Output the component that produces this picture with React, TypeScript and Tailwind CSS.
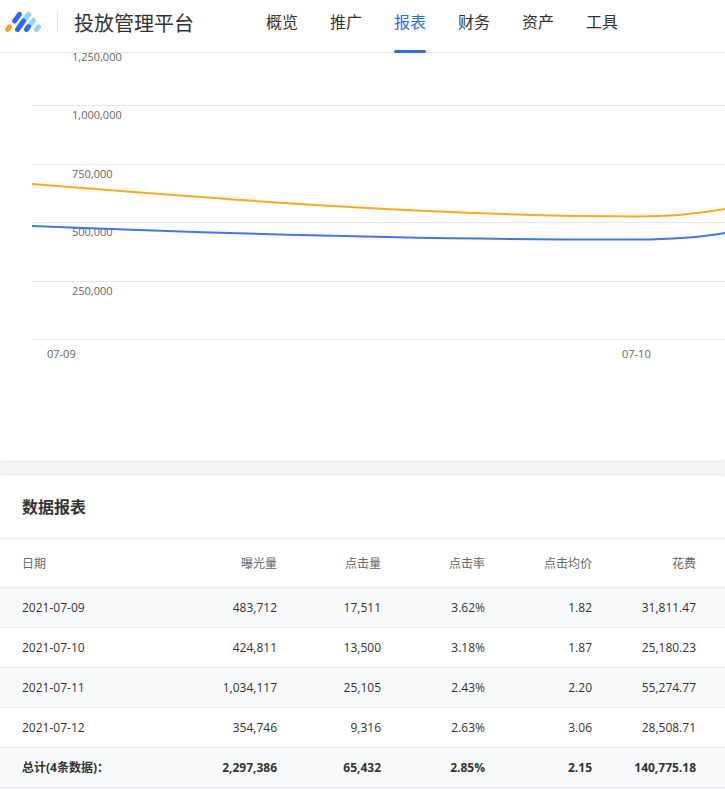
import clsx from 'clsx'

const NAV = ['概览', '推广', '报表', '财务', '资产', '工具']

const COLUMNS = [
  { label: '日期', width: 'w-auto' },
  { label: '曝光量', width: 'w-[104px]' },
  { label: '点击量', width: 'w-[104px]' },
  { label: '点击率', width: 'w-[104px]' },
  { label: '点击均价', width: 'w-[107px]' },
  { label: '花费', width: 'w-[104px]' },
]

const ROWS = [
  ['2021-07-09', '483,712', '17,511', '3.62%', '1.82', '31,811.47'],
  ['2021-07-10', '424,811', '13,500', '3.18%', '1.87', '25,180.23'],
  ['2021-07-11', '1,034,117', '25,105', '2.43%', '2.20', '55,274.77'],
  ['2021-07-12', '354,746', '9,316', '2.63%', '3.06', '28,508.71'],
]

const TOTAL = ['总计(4条数据)：', '2,297,386', '65,432', '2.85%', '2.15', '140,775.18']

const GRID = [
  { y: 52, label: '1,000,000' },
  { y: 111, label: '750,000' },
  { y: 169, label: '500,000' },
  { y: 228, label: '250,000' },
]

const Logo = () => (
  <svg className="h-7 w-10" viewBox="0 0 40 28" fill="none" strokeWidth="5" strokeLinecap="round" aria-hidden="true">
    <path d="M21.500 12L25.500 6.500M26 18L30.500 12.500M33.500 21.500L35.500 18.800" stroke="#8fd3ff" />
    <path d="M4.500 21.500L6.500 18.800" stroke="#ffa70f" />
    <path d="M11.500 13L16.500 6.500M14.500 21.500L20.500 13M23.500 21.500L25.500 18.800" stroke="#2a6cf6" />
  </svg>
)

const Header = () => (
  <header className="flex h-[53px] items-start border-b border-[#e6e7ed] bg-white">
    <div className="flex h-11 w-[266px] shrink-0 items-center pl-[3px]">
      <Logo />
      <div className="ml-[14px] h-5 w-px bg-[#e0e1e6]" />
      <h1 className="ml-4 pt-1 text-xl leading-7">投放管理平台</h1>
    </div>
    <nav className="flex gap-8">
      {NAV.map((item) => (
        <a
          key={item}
          href="#"
          className={clsx(
            'flex h-[53px] flex-col justify-between whitespace-nowrap text-base',
            item === '报表' && 'text-[#2a6cf6]',
          )}
        >
          <span className="pt-[10px] leading-6">{item}</span>
          {item === '报表' && <span className="h-[3px] rounded-sm bg-[#2a6cf6]" />}
        </a>
      ))}
    </nav>
  </header>
)

const Chart = () => (
  <section className="h-[409px] rounded-b border-b border-[#e4e6eb] bg-white pl-8">
    <svg
      className="h-[320px] w-full overflow-visible text-[11px]"
      fill="#666"
      role="img"
      aria-label="曝光量"
    >
      {GRID.map(({ y, label }) => (
        <g key={label}>
          <line x1="0" x2="100%" y1={y + 0.5} y2={y + 0.5} stroke="#e5e6ea" />
          <text x="40" y={y + 14}>{label}</text>
        </g>
      ))}
      <text x="40" y="8">1,250,000</text>
      <line x1="0" x2="100%" y1="286.5" y2="286.5" stroke="#e5e6ea" />
      <g fill="none" strokeWidth="2">
        <path d="M0 131C200 147 400 163 605 163.500C635 163.500 665 161 693 156S960 60 1180 20" stroke="#ffaa14" />
        <path d="M0 173C200 181 400 187 605 186.500C635 186.500 665 185 693 180S960 80 1180 44" stroke="#3c78ee" />
      </g>
      <text x="15" y="305">07-09</text>
      <text x="590" y="305">07-10</text>
    </svg>
  </section>
)

const Report = () => (
  <section className="mt-3 rounded-t border-t border-[#e4e6eb] bg-white">
    <h2 className="px-[22px] pt-5 pb-[19px] text-base leading-6 font-bold">数据报表</h2>
    <table className="w-full table-fixed border-collapse text-right text-xs leading-4">
      <thead className="border-y border-t-[#ebecef] border-b-[#dfe1e6] text-[#666]">
        <tr className="h-[49px]">
          {COLUMNS.map(({ label, width }) => (
            <th
              key={label}
              className={clsx('pt-0.5 pr-[29px] font-normal first:pl-[22px] first:text-left', width)}
            >
              {label}
            </th>
          ))}
        </tr>
      </thead>
      <tbody>
        {[...ROWS, TOTAL].map((row) => (
          <tr
            key={row[0]}
            className="h-10 border-b border-[#ebecef] odd:bg-[#f9fafc] last:font-bold"
          >
            {row.map((cell, i) => (
              <td key={i} className="pr-[29px] whitespace-nowrap first:pl-[22px] first:text-left">
                {cell}
              </td>
            ))}
          </tr>
        ))}
      </tbody>
    </table>
  </section>
)

export default function App() {
  return (
    <div className="min-h-screen overflow-x-clip bg-[#f4f5f7] font-['Open_Sans','Noto_Sans_CJK_SC',sans-serif] text-[#333]">
      <Header />
      <main>
        <Chart />
        <Report />
      </main>
    </div>
  )
}
